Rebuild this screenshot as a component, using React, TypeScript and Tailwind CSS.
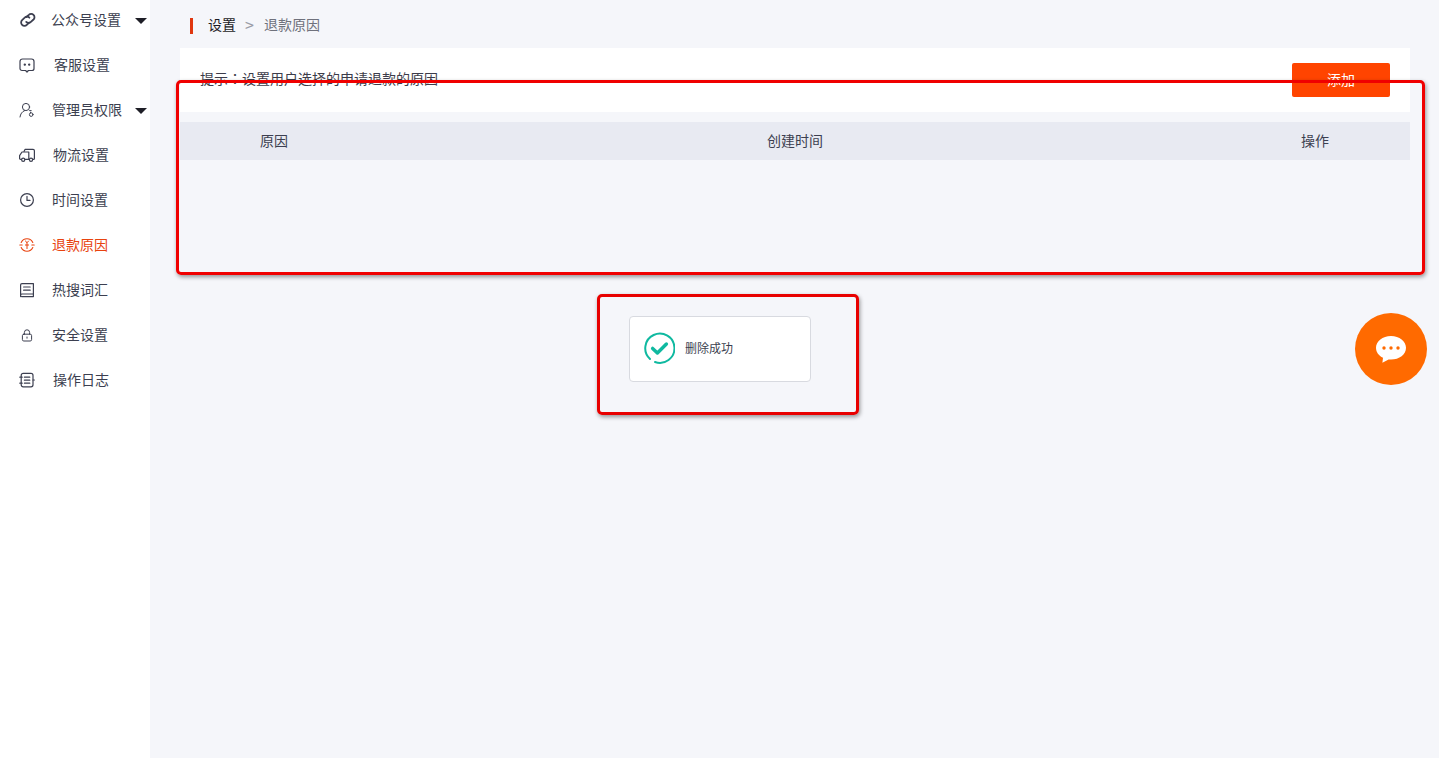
const font = "font-['Noto_Sans_CJK_SC','Noto_Sans',sans-serif]";

function Icon({ children, color = "#3c3f50" }: { children: React.ReactNode; color?: string }) {
  return (
    <svg className="w-[18px] h-[18px] flex-shrink-0" viewBox="0 0 18 18" fill="none" stroke={color} strokeWidth="1.2" strokeLinecap="round" strokeLinejoin="round">
      {children}
    </svg>
  );
}

const menu = [
  {
    label: "公众号设置",
    textClass: "ml-[15px]",
    arrow: true,
    icon: (
      <g strokeWidth="1.8">
        <path d="M8.4 6 10.8 3.8a3.3 3.3 0 0 1 4.7 0 3.3 3.3 0 0 1 0 4.7l-2.6 2.4a3.3 3.3 0 0 1-4.7 0" />
        <path d="M11.2 11.6 8.8 13.8a3.3 3.3 0 0 1-4.7 0 3.3 3.3 0 0 1 0-4.7l2.6-2.4a3.3 3.3 0 0 1 4.7 0" />
      </g>
    ),
  },
  {
    label: "客服设置",
    textClass: "ml-[18px]",
    icon: (
      <>
        <path d="M4.5 3h9A2.5 2.5 0 0 1 16 5.5v7a2 2 0 0 1-2 2h-3.6L9 16l-1.4-1.5H4a2 2 0 0 1-2-2v-7A2.5 2.5 0 0 1 4.5 3z" />
        <circle cx="6.8" cy="8.6" r=".6" fill="#3c3f50" />
        <circle cx="11.2" cy="8.6" r=".6" fill="#3c3f50" />
      </>
    ),
  },
  {
    label: "管理员权限",
    textClass: "ml-[16px]",
    arrow: true,
    icon: (
      <g strokeWidth="1">
        <circle cx="8" cy="6" r="3.6" />
        <path d="M2 16c.4-3 2-5.4 4.6-6.4" />
        <circle cx="13.2" cy="13.6" r="1.8" />
        <path d="M11.6 9.6h1.6M12.6 11.2v.6" />
      </g>
    ),
  },
  {
    label: "物流设置",
    textClass: "ml-[17px]",
    icon: (
      <>
        <path d="M6 5.4 7 3.4h8a1.4 1.4 0 0 1 1.4 1.4v7.6a1 1 0 0 1-1 1h-.6" />
        <path d="M3.4 13.4H2.6a1 1 0 0 1-1-1V9.6L4 6h6.8v7.4H7" />
        <circle cx="5.2" cy="13.8" r="1.6" />
        <circle cx="13" cy="13.8" r="1.6" />
      </>
    ),
  },
  {
    label: "时间设置",
    textClass: "ml-[16px]",
    icon: (
      <>
        <circle cx="9" cy="9" r="6.4" />
        <path d="M9 5.4V9.4h3" />
      </>
    ),
  },
  {
    label: "退款原因",
    textClass: "ml-[16px] text-[#e8430f]",
    active: true,
    icon: (
      <>
        <path d="M14.8 6.4A6.4 6.4 0 0 0 3.2 6.4M3.2 11.6a6.4 6.4 0 0 0 11.6 0" strokeWidth="1.1" />
        <path d="M1.8 9h2.4M13.8 9h2.4" strokeWidth="1.1" />
        <path d="M9 12.6V6.4M7.4 9h3.2M7.4 5 9 6.6 10.6 5" strokeWidth="1" />
      </>
    ),
  },
  {
    label: "热搜词汇",
    textClass: "ml-[16px]",
    icon: (
      <>
        <path d="M2.6 15.6V4a1.4 1.4 0 0 1 1.4-1.4h11.4V15.6H3.6" />
        <path d="M2.6 14a1 1 0 0 1 1-1h11.8" />
        <path d="M5.6 6h6.6M5.6 9.2h6.6" />
      </>
    ),
  },
  {
    label: "安全设置",
    textClass: "ml-[16px]",
    icon: (
      <g strokeWidth="1">
        <rect x="4.4" y="8.2" width="9.2" height="6.8" rx="1.4" />
        <path d="M6.4 8.2V6.4a2.6 2.6 0 0 1 5.2 0v1.8" />
        <path d="M9 11v1.2" />
      </g>
    ),
  },
  {
    label: "操作日志",
    textClass: "ml-[17px]",
    icon: (
      <>
        <rect x="3.2" y="2.4" width="11.8" height="13.4" rx="2" />
        <path d="M6.4 6.2h5.4M6.4 9.2h5.4M6.4 12.2h5.4" />
        <path d="M1.8 6.2h2.4M1.8 12.2h2.4M15 9h1.4" />
      </>
    ),
  },
];

function Sidebar() {
  return (
    <aside className="w-[150px] flex-shrink-0 bg-white flex flex-col gap-[5px]">
      {menu.map((item) => (
        <div key={item.label} className="h-[40px] flex items-center pl-[18px] text-[14px] text-[#3c3f50]">
          <Icon color={item.active ? "#e8430f" : "#3c3f50"}>{item.icon}</Icon>
          <span className={`pb-[2px] ${item.textClass}`}>{item.label}</span>
          {item.arrow && (
            <span className="ml-auto mr-[3px] mt-[1px] w-0 h-0 border-x-[6.5px] border-x-transparent border-t-[6px] border-t-[#1e1e26]" />
          )}
        </div>
      ))}
    </aside>
  );
}

function ChatBubble() {
  return (
    <svg className="w-[34px] h-[30px]" viewBox="0 0 34 30">
      <path d="M17 2C8.6 2 2 7.2 2 13.8c0 4.4 2.8 8 7 10l-.6 5 6.2-3.4c.8.1 1.6.2 2.4.2 8.4 0 15-5.2 15-11.8S25.4 2 17 2z" fill="#fff" />
      <circle cx="10" cy="14" r="1.7" fill="#ff6a00" />
      <circle cx="17" cy="14" r="1.7" fill="#ff6a00" />
      <circle cx="24" cy="14" r="1.7" fill="#ff6a00" />
    </svg>
  );
}

export default function App() {
  return (
    <div className={`${font} relative flex h-[758px] overflow-hidden bg-[#f5f6fa]`}>
      <Sidebar />

      <main className="flex-1 pl-[30px] pr-[29px]">
        {/* Breadcrumb */}
        <div className="h-[48px] pt-[4px] pl-[10px] flex items-center text-[14px]">
          <span className="w-[3px] h-[16px] bg-[#e0370f]" />
          <span className="ml-[15px] pb-[4px] text-[#1c1c24]">设置</span>
          <span className="ml-[9px] pb-[4px] text-[16px] leading-[20px] text-[#9a9ca6]">&gt;</span>
          <span className="ml-[10px] pb-[4px] text-[#6f717c]">退款原因</span>
        </div>

        {/* Tip */}
        <div className="h-[64px] bg-white pl-[20px] pr-[20px] flex items-start justify-between">
          <p className="mt-[20px] text-[14px] leading-[20px] text-[#3c3c4a]">
            提示<span className="font-['Noto_Sans_CJK_TC',sans-serif]">：</span>设置用户选择的申请退款的原因
          </p>
          <button className="mt-[15px] w-[98px] h-[34px] pb-[2px] rounded-[2px] bg-[#ff4400] text-white text-[14px]">添加</button>
        </div>

        {/* Table header */}
        <div className="mt-[10px] h-[38px] pb-[2px] bg-[#e8eaf2] grid grid-cols-[190px_1fr_190px] items-center text-center text-[14px] text-[#3c3f50]">
          <span className="pr-[2px]">原因</span>
          <span>创建时间</span>
          <span>操作</span>
        </div>
      </main>

      {/* Toast */}
      <div className="absolute left-[629px] top-[316px] w-[182px] h-[66px] bg-white border border-[#d8dae0] rounded-[4px] flex items-center pl-[13px]">
        <svg className="w-[32px] h-[32px] mb-[2px]" viewBox="0 0 32 32" fill="none" stroke="#0fb9a0" strokeLinecap="round" strokeLinejoin="round">
          <path d="M7 27A14.6 14.6 0 1 1 12 30" strokeWidth="2" />
          <path d="M9.6 16.4l4.8 4.6 9-9" strokeWidth="3.4" />
        </svg>
        <span className="ml-[10px] pb-[2px] text-[12px] text-[#3c3f50]">删除成功</span>
      </div>

      {/* Chat button */}
      <div className="absolute left-[1355px] top-[313px] w-[72px] h-[72px] rounded-full bg-[#ff6a00] flex items-center justify-center">
        <ChatBubble />
      </div>

      {/* Annotation boxes */}
      <div className="absolute left-[176px] top-[80px] w-[1249px] h-[195px] border-[3px] border-[#f00000] rounded-[5px] shadow-[1px_2px_4px_rgba(0,0,0,0.4)]" />
      <div className="absolute left-[597px] top-[294px] w-[262px] h-[121px] border-[3px] border-[#e80000] rounded-[5px] shadow-[1px_2px_4px_rgba(0,0,0,0.4)]" />
    </div>
  );
}
